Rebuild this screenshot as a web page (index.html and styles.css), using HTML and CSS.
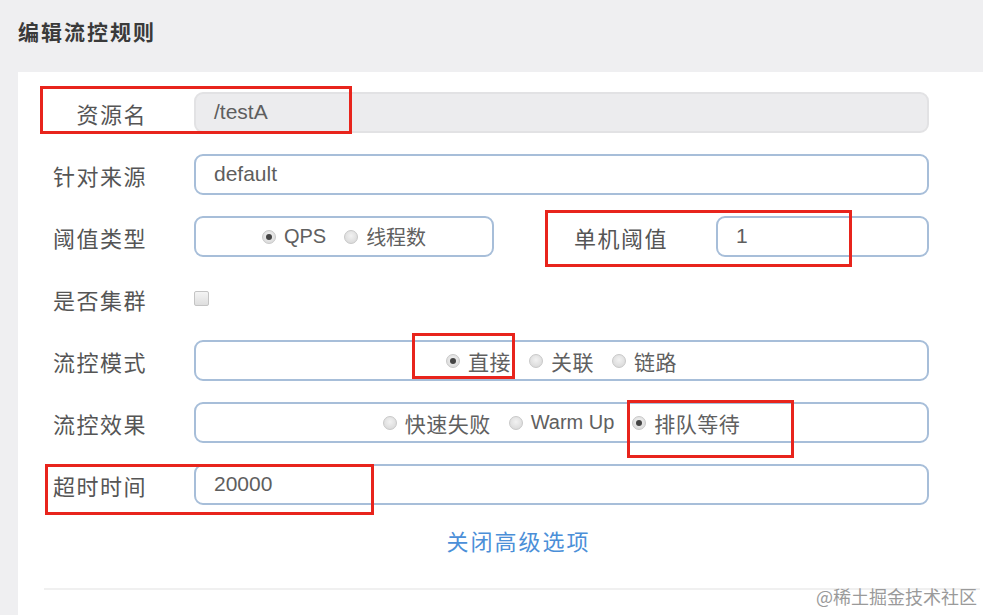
FILE: index.html
```html
<!DOCTYPE html>
<html>
<head>
    <title>编辑流控规则</title>
    <meta charset="utf-8">
    <link rel="stylesheet" href="styles.css">
</head>
<body>
    <h2 class="title">编辑流控规则</h2>

    <div class="panel">
        <div class="row">
            <label class="label">资源名</label>
            <div class="input disabled">/testA</div>
            <div class="mark mark-name"></div>
        </div>

        <div class="row">
            <label class="label">针对来源</label>
            <div class="input">default</div>
        </div>

        <div class="row">
            <label class="label">阈值类型</label>
            <div class="group small">
                <span class="radio checked"></span><span class="opt">QPS</span>
                <span class="radio"></span><span class="opt">线程数</span>
            </div>
            <label class="label label2">单机阈值</label>
            <div class="input">1</div>
            <div class="mark mark-count"></div>
        </div>

        <div class="row">
            <label class="label">是否集群</label>
            <span class="checkbox"></span>
        </div>

        <div class="row">
            <label class="label">流控模式</label>
            <div class="group">
                <span class="radio checked"></span><span class="opt cn">直接</span>
                <span class="radio"></span><span class="opt cn">关联</span>
                <span class="radio"></span><span class="opt cn">链路</span>
            </div>
            <div class="mark mark-direct"></div>
        </div>

        <div class="row">
            <label class="label">流控效果</label>
            <div class="group">
                <span class="radio"></span><span class="opt cn">快速失败</span>
                <span class="radio"></span><span class="opt">Warm Up</span>
                <span class="radio checked"></span><span class="opt cn">排队等待</span>
            </div>
            <div class="mark mark-queue"></div>
        </div>

        <div class="row">
            <label class="label">超时时间</label>
            <div class="input">20000</div>
            <div class="mark mark-timeout"></div>
        </div>

        <div class="more">
            <a class="link">关闭高级选项</a>
        </div>

        <div class="footer-line"></div>
        <div class="btn-peek"></div>
    </div>

    <div class="watermark">@稀土掘金技术社区</div>
</body>
</html>
```

FILE: styles.css
```css
html, body {
    margin: 0;
    height: 100%;
    overflow: hidden;
}

body {
    background-color: #efeff1;
    font-family: "Liberation Sans", "Noto Sans CJK SC", sans-serif;
    color: #555;
}

.title {
    margin: 0;
    padding: 16px 0 0 18px;
    height: 56px;
    box-sizing: border-box;
    font-size: 21px;
    letter-spacing: 2px;
    font-weight: bold;
    color: #3a3a3a;
}

.panel {
    position: relative;
    margin-left: 18px;
    background-color: #fff;
    height: 560px;
    margin-top: 16px;
    padding-top: 20px;
    box-sizing: border-box;
}

.row {
    position: relative;
    display: flex;
    align-items: center;
    height: 41px;
    margin-bottom: 21px;
    width: 911px;
}

.label {
    width: 129px;
    flex: none;
    text-align: right;
    margin-right: 47px;
    font-size: 22px;
    letter-spacing: 1.5px;
    color: #555;
}

.label2 {
    width: 174px;
    margin-right: 48px;
}

.input {
    flex: 1;
    height: 41px;
    box-sizing: border-box;
    border: 2px solid #a7bed9;
    border-radius: 9px;
    padding: 0 18px;
    font-size: 21px;
    line-height: 35px;
    color: #5e5e5e;
}

.input.disabled {
    background-color: #ececee;
    border-color: #e2e2e4;
}

.group {
    flex: 1;
    height: 41px;
    box-sizing: border-box;
    border: 2px solid #a7bed9;
    border-radius: 9px;
    display: flex;
    align-items: center;
    justify-content: center;
    font-size: 20px;
    color: #606060;
}

.group.small {
    flex: none;
    width: 300px;
}

.radio {
    width: 12px;
    height: 12px;
    border-radius: 50%;
    background: radial-gradient(circle at 50% 40%, #f2f2f2, #d4d4d4);
    border: 1px solid #c8c8c8;
    margin-right: 8px;
    position: relative;
    flex: none;
}

.radio.checked::after {
    content: "";
    position: absolute;
    left: 3px;
    top: 3px;
    width: 6px;
    height: 6px;
    border-radius: 50%;
    background-color: #444;
}

.opt {
    margin-right: 18px;
}

.opt:last-child {
    margin-right: 0;
}

.opt.cn {
    font-size: 21px;
    letter-spacing: 0.5px;
}

.checkbox {
    width: 13px;
    height: 13px;
    border: 1px solid #c4c4c4;
    border-radius: 2px;
    background: linear-gradient(#f4f4f4, #dedede);
}

/* red annotation boxes */
.mark {
    position: absolute;
    box-sizing: border-box;
    border: 3px solid #e8241c;
}

.mark-name { left: 22px; top: -6px; width: 312px; height: 48px; }
.mark-count { left: 527px; top: -6px; width: 307px; height: 57px; }
.mark-direct { left: 394px; top: -7px; width: 103px; height: 46px; }
.mark-queue { left: 609px; top: -2px; width: 167px; height: 58px; }
.mark-timeout { left: 27px; top: 0; width: 329px; height: 51px; }

.more {
    width: 821px;
    padding-left: 90px;
    text-align: center;
    margin-top: -2px;
}

.link {
    font-size: 22px;
    letter-spacing: 2px;
    color: #4b8fd8;
}

.footer-line {
    margin: 32px 3px 0 26px;
    height: 2px;
    background-color: #f0f0f0;
}

.btn-peek {
    position: absolute;
    left: 799px;
    bottom: 0;
    width: 78px;
    height: 3px;
    background-color: #c6e6c8;
}

.watermark {
    position: absolute;
    right: 6px;
    bottom: 6px;
    font-size: 18px;
    color: #9a9a9a;
    font-family: "Noto Sans CJK SC", sans-serif;
}
```
